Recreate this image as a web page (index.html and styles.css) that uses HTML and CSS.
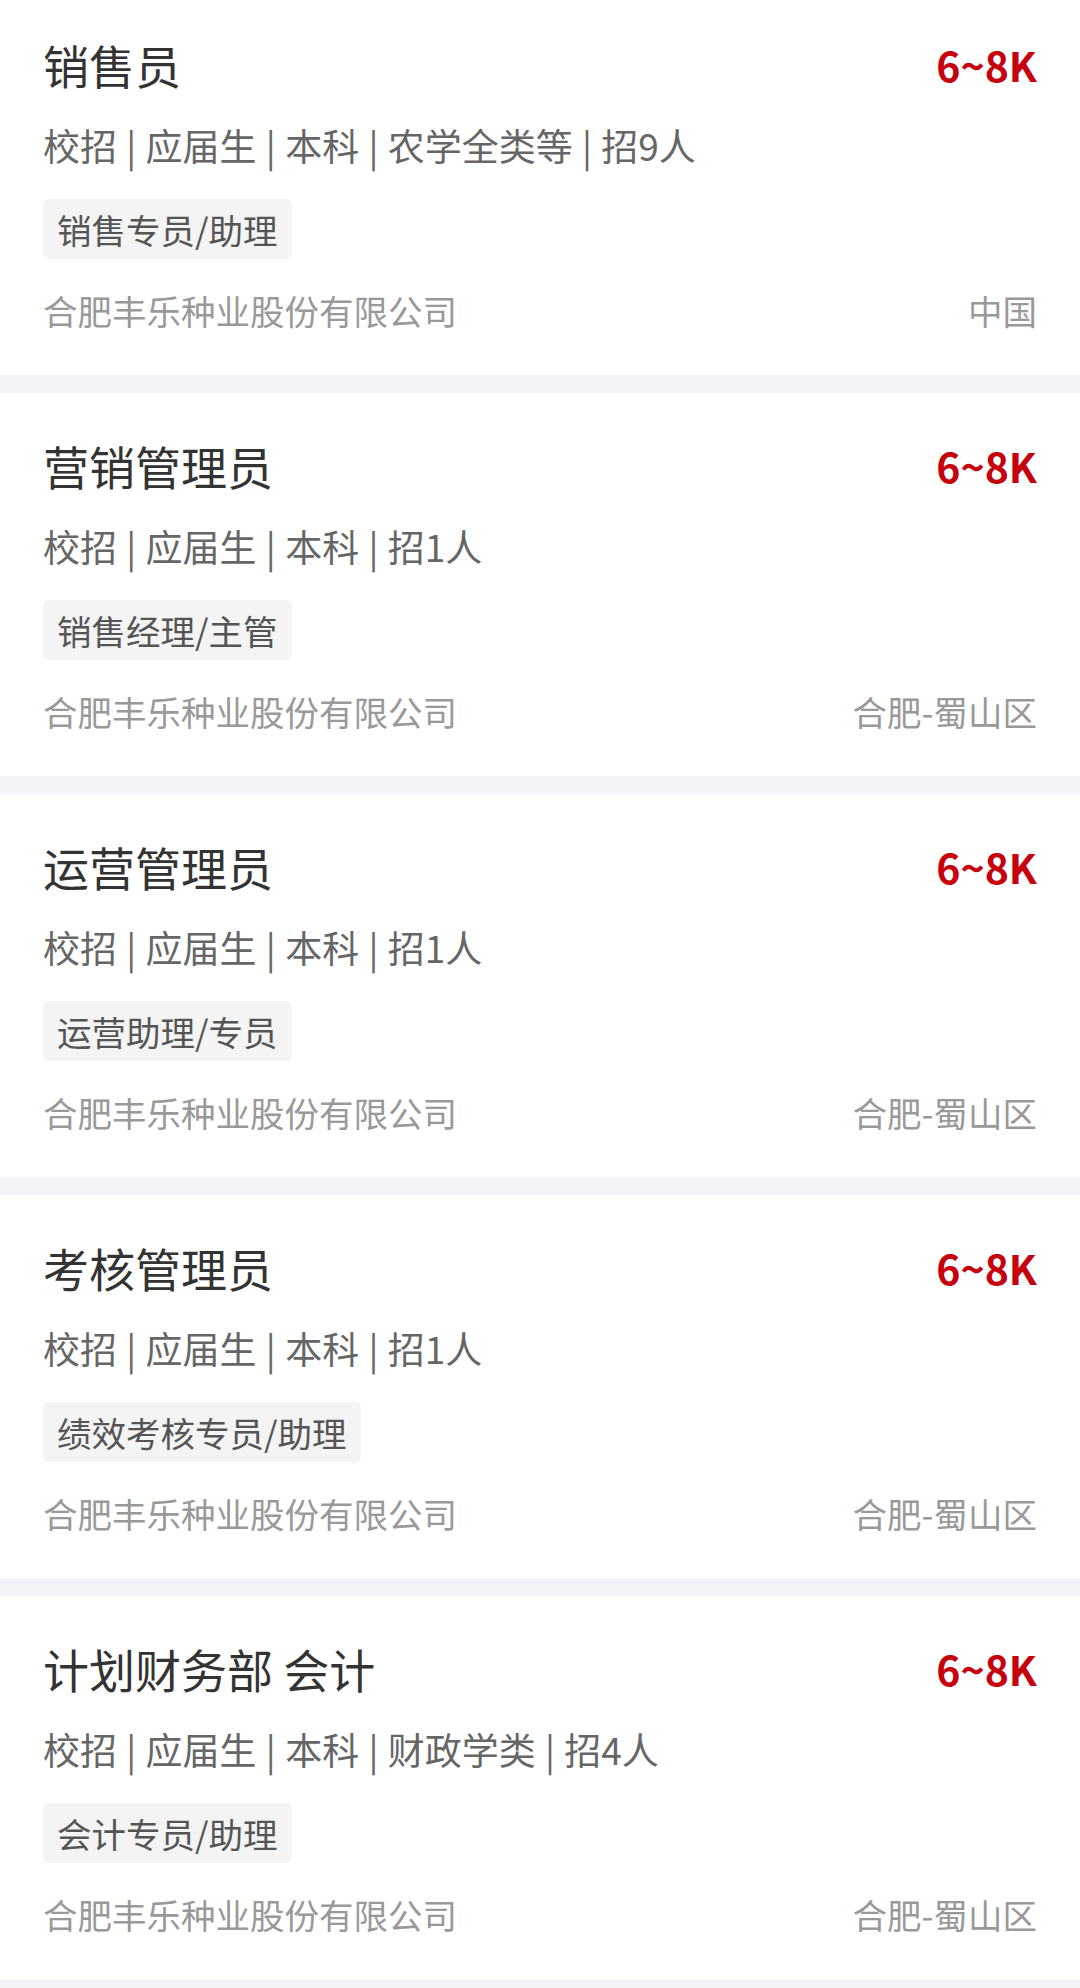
FILE: index.html
```html
<!DOCTYPE html>
<html lang="zh-CN">
<head>
    <meta charset="UTF-8">
    <meta name="viewport" content="width=device-width, initial-scale=1.0">
    <title>职位列表</title>
    <link rel="stylesheet" href="styles.css">
</head>
<body>
    <div class="job-list">
        <div class="job">
            <div class="job-head">
                <div class="job-title">销售员</div>
                <div class="job-salary">6~8K</div>
            </div>
            <div class="job-meta">校招 | 应届生 | 本科 | 农学全类等 | 招9人</div>
            <div class="job-tags"><span class="tag">销售专员/助理</span></div>
            <div class="job-foot">
                <div class="company">合肥丰乐种业股份有限公司</div>
                <div class="city">中国</div>
            </div>
        </div>
        <div class="job">
            <div class="job-head">
                <div class="job-title">营销管理员</div>
                <div class="job-salary">6~8K</div>
            </div>
            <div class="job-meta">校招 | 应届生 | 本科 | 招1人</div>
            <div class="job-tags"><span class="tag">销售经理/主管</span></div>
            <div class="job-foot">
                <div class="company">合肥丰乐种业股份有限公司</div>
                <div class="city">合肥-蜀山区</div>
            </div>
        </div>
        <div class="job">
            <div class="job-head">
                <div class="job-title">运营管理员</div>
                <div class="job-salary">6~8K</div>
            </div>
            <div class="job-meta">校招 | 应届生 | 本科 | 招1人</div>
            <div class="job-tags"><span class="tag">运营助理/专员</span></div>
            <div class="job-foot">
                <div class="company">合肥丰乐种业股份有限公司</div>
                <div class="city">合肥-蜀山区</div>
            </div>
        </div>
        <div class="job">
            <div class="job-head">
                <div class="job-title">考核管理员</div>
                <div class="job-salary">6~8K</div>
            </div>
            <div class="job-meta">校招 | 应届生 | 本科 | 招1人</div>
            <div class="job-tags"><span class="tag">绩效考核专员/助理</span></div>
            <div class="job-foot">
                <div class="company">合肥丰乐种业股份有限公司</div>
                <div class="city">合肥-蜀山区</div>
            </div>
        </div>
        <div class="job">
            <div class="job-head">
                <div class="job-title">计划财务部 会计</div>
                <div class="job-salary">6~8K</div>
            </div>
            <div class="job-meta">校招 | 应届生 | 本科 | 财政学类 | 招4人</div>
            <div class="job-tags"><span class="tag">会计专员/助理</span></div>
            <div class="job-foot">
                <div class="company">合肥丰乐种业股份有限公司</div>
                <div class="city">合肥-蜀山区</div>
            </div>
        </div>
    </div>
</body>
</html>
```

FILE: styles.css
```css
body {
    margin: 0;
    background-color: #f4f4f8;
    font-family: "Noto Sans CJK SC", "Noto Sans", sans-serif;
    color: #333;
    overflow: hidden;
}
.job-list {
    display: flex;
    flex-direction: column;
    gap: 18px;
    margin-top: -8px;
}
.job {
    background-color: #fff;
    padding: 41px 43px 41px 43px;
    height: 383px;
    box-sizing: border-box;
}
.job-head {
    display: flex;
    justify-content: space-between;
    align-items: center;
    height: 62px;
}
.job-title {
    font-size: 46px;
    line-height: 62px;
    color: #333;
}
.job-salary {
    font-size: 41px;
    font-weight: bold;
    line-height: 62px;
    color: #c6000c;
}
.job-meta {
    margin-top: 24px;
    font-size: 37px;
    line-height: 52px;
    word-spacing: 1px;
    color: #666;
}
.job-tags {
    margin-top: 28px;
    display: flex;
    gap: 16px;
}
.tag {
    display: inline-block;
    height: 60px;
    line-height: 60px;
    padding: 0 14px;
    font-size: 34.5px;
    color: #555;
    background-color: #f4f4f4;
    border-radius: 6px;
}
.job-foot {
    margin-top: 26px;
    display: flex;
    justify-content: space-between;
    font-size: 34.5px;
    line-height: 50px;
    color: #999;
}
```
